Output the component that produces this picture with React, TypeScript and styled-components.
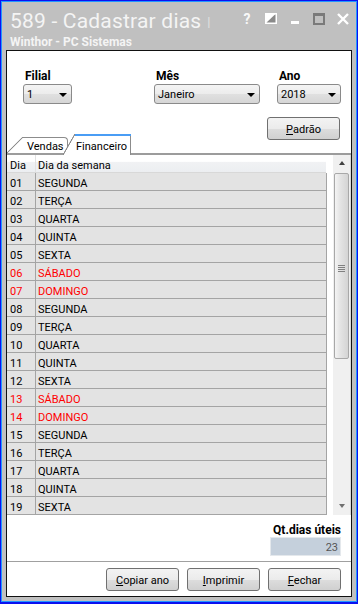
import React from 'react';
import styled, { createGlobalStyle, css } from 'styled-components';

const GlobalStyle = createGlobalStyle`
  html, body { margin: 0; padding: 0; background: #fff; }
  body { font-family: Roboto, "Liberation Sans", sans-serif; font-size: 11px; color: #000; }
  * { box-sizing: border-box; }
`;

const Window = styled.div`
  width: 358px;
  height: 604px;
  border: 1px solid #0a10f0;
  border-bottom-width: 2px;
  display: flex;
`;

const WindowFrame = styled.div`
  flex: 1;
  border: 1px solid #2196ff;
  background: #c0c0c0;
  padding: 0 4px 4px 4px;
  display: flex;
  flex-direction: column;
`;

const TitleBar = styled.div`
  height: 48px;
  flex-shrink: 0;
  display: flex;
  justify-content: space-between;
  align-items: flex-start;
  padding: 7px 0 0 4px;
  margin-right: -3px;
`;

const TitleText = styled.div`
  display: flex;
  flex-direction: column;
  color: #f4f4f4;
`;

const Title = styled.div`
  font-size: 21px;
  line-height: 24px;
  white-space: nowrap;
  letter-spacing: 0.2px;
`;

const Cut = styled.span`
  color: #e2e2e2;
  font-size: 13px;
  margin-left: 6px;
  vertical-align: 2px;
`;

const Subtitle = styled.div`
  font-size: 12px;
  font-weight: bold;
  line-height: 14px;
  margin-top: 1px;
`;

const Controls = styled.div`
  display: flex;
  padding-top: 1px;
`;

const Ctl = styled.div`
  width: 24px;
  height: 17px;
  display: flex;
  align-items: center;
  justify-content: center;
  color: #f8f8f8;
  font-weight: bold;
  font-size: 14px;
`;

const Panel = styled.div`
  flex: 1;
  background: #fff;
  border: 1px solid #111;
  display: flex;
  flex-direction: column;
`;

const FilterRow = styled.div`
  display: flex;
  padding: 16.5px 0 0 16px;
`;

const Field = styled.div<{ $width: number; $ml?: number }>`
  width: ${(p) => p.$width}px;
  margin-left: ${(p) => p.$ml || 0}px;
  display: flex;
  flex-direction: column;
`;

const Label = styled.div`
  font-size: 12px;
  font-weight: bold;
  line-height: 14px;
  padding: 1px 0 0 2px;
  margin-bottom: 1.5px;
`;

const Select = styled.div`
  height: 20px;
  border: 1px solid #8a8a8a;
  border-radius: 3px;
  background: linear-gradient(#f4f4f4, #ececec 50%, #e0e0e0 51%, #d6d6d6);
  display: flex;
  align-items: center;
  justify-content: space-between;
  padding: 1px 4px 0 3px;
  font-size: 11px;
`;

const Arrow = styled.span`
  width: 0;
  height: 0;
  border-left: 4px solid transparent;
  border-right: 4px solid transparent;
  border-top: 4px solid #000;
`;

const ToolRow = styled.div`
  display: flex;
  justify-content: space-between;
  padding-top: 13px;
  border-bottom: 2px solid #9c9c9c;
`;

const Tabs = styled.div`
  display: flex;
  align-items: flex-end;
  align-self: flex-end;
  margin-bottom: -2px;
`;

const Tab = styled.div<{ $active?: boolean; $slant: number; $width: number }>`
  position: relative;
  width: ${(p) => p.$width}px;
  margin-left: ${(p) => p.$slant}px;
  background: #fff;
  border-top: 1px solid #8c8c8c;
  border-right: 1px solid #8c8c8c;
  font-size: 11px;
  display: flex;
  align-items: flex-end;

  &::before {
    content: '';
    position: absolute;
    right: 100%;
    top: -1px;
    bottom: 0;
    width: ${(p) => p.$slant}px;
    background: linear-gradient(to bottom right, transparent calc(50% - 0.8px), #8c8c8c calc(50% - 0.3px), #8c8c8c calc(50% + 0.3px), #fff calc(50% + 0.8px));
  }

  ${(p) => p.$active
    ? css`
      height: 21px;
      z-index: 2;
      padding: 0 0 2px 1px;
      margin-left: ${p.$slant - 5}px;
      &::after {
        content: '';
        position: absolute;
        top: -1px;
        left: 0;
        right: -1px;
        height: 2px;
        background: #4a9df5;
      }
    `
    : css`
      height: 16px;
      margin-bottom: 2px;
      padding: 0 0 0 4px;
      border-top-right-radius: 4px;
    `}
`;

const Button = styled.div<{ $width?: number }>`
  width: ${(p) => p.$width || 73}px;
  height: 23px;
  border: 1px solid #707070;
  border-radius: 3px;
  background: linear-gradient(#f3f3f3, #ebebeb 50%, #dddddd 51%, #d0d0d0);
  display: flex;
  align-items: center;
  justify-content: center;
  padding-top: 1px;
  font-size: 11px;
`;

const PadraoButton = styled(Button)`
  margin: 0 11px 13px 0;
`;

const GridArea = styled.div`
  height: 360px;
  flex-shrink: 0;
  display: flex;
`;

const Table = styled.div`
  width: 320px;
  display: flex;
  flex-direction: column;
`;

const HeaderRow = styled.div`
  height: 18px;
  display: grid;
  grid-template-columns: 29px 1fr;
  border-bottom: 1px solid #d8d8d8;
  background: linear-gradient(#fff 0 38%, #f1f2f4 40%, #eceef1);
  margin-right: 1px;
`;

const HeadCell = styled.div<{ $first?: boolean }>`
  padding-left: ${(p) => (p.$first ? 3 : 2)}px;
  display: flex;
  align-items: flex-end;
  ${(p) => p.$first && css`border-right: 1px solid #e2e2e2;`}
`;

const Row = styled.div<{ $red?: boolean }>`
  height: 18px;
  display: grid;
  grid-template-columns: 29px 1fr;
  background: #e3e3e3;
  border-bottom: 1px solid #a4a4a4;
  border-right: 1px solid #a4a4a4;
  color: ${(p) => (p.$red ? '#ff0000' : '#000')};
`;

const Cell = styled.div<{ $first?: boolean }>`
  padding: 3px 0 0 ${(p) => (p.$first ? 3 : 2)}px;
  display: flex;
  align-items: center;
  ${(p) => p.$first && css`border-right: 1px solid #a4a4a4;`}
`;

const ScrollBar = styled.div`
  margin-left: auto;
  width: 18px;
  background: #f0f0f0;
  border-right: 1px solid #d8d8d8;
  display: flex;
  flex-direction: column;
  align-items: center;
  padding: 6px 0 0 0;
`;

const ScrollArrow = styled.span<{ $down?: boolean }>`
  width: 0;
  height: 0;
  border-left: 3.5px solid transparent;
  border-right: 3.5px solid transparent;
  ${(p) => (p.$down
    ? css`border-top: 4px solid #707070; margin-top: auto; margin-bottom: 7px;`
    : css`border-bottom: 4px solid #404040;`)}
`;

const Thumb = styled.div`
  width: 15px;
  height: 186px;
  margin-top: 8px;
  border: 1px solid #a8a8a8;
  border-radius: 2px;
  background: linear-gradient(to right, #f4f4f4, #e4e4e4 40%, #d4d4d4);
  display: flex;
  align-items: center;
  justify-content: center;
`;

const Grip = styled.div`
  width: 7px;
  height: 8px;
  background: repeating-linear-gradient(#808080 0 1px, transparent 1px 2px);
  margin-top: 6px;
`;

const Footer = styled.div`
  display: flex;
  flex-direction: column;
  align-items: flex-end;
  padding: 8px 10px 5px 0;
  border-bottom: 1px solid #a0a0a0;
`;

const TotalLabel = styled(Label)`
  padding: 0;
  margin-bottom: 0;
`;

const TotalBox = styled.div`
  width: 71px;
  height: 19px;
  background: #c5d0dc;
  border: 1px solid #e4e8ec;
  color: #555;
  font-size: 11px;
  display: flex;
  align-items: center;
  justify-content: flex-end;
  padding: 1px 2px 0 0;
`;

const ButtonBar = styled.div`
  display: flex;
  justify-content: flex-end;
  gap: 8px;
  padding: 6px 10px 4px 0;
`;

const days = ['SEGUNDA', 'TERÇA', 'QUARTA', 'QUINTA', 'SEXTA', 'SÁBADO', 'DOMINGO'];
const rows = Array.from({ length: 19 }, (_, i) => ({
  dia: String(i + 1).padStart(2, '0'),
  nome: days[i % 7],
  red: i % 7 >= 5,
}));

export default function App() {
  return (
    <>
      <GlobalStyle />
      <Window>
        <WindowFrame>
          <TitleBar>
            <TitleText>
              <Title>589 - Cadastrar dias<Cut>|</Cut></Title>
              <Subtitle>Winthor - PC Sistemas</Subtitle>
            </TitleText>
            <Controls>
              <Ctl>?</Ctl>
              <Ctl>
                <svg width="12" height="11" viewBox="0 0 12 11">
                  <rect x="0.75" y="0.75" width="10.5" height="9.5" fill="#8a8a8a" stroke="#fff" strokeWidth="1.5" />
                  <polygon points="1,1 10.5,1 1,10" fill="#fff" />
                </svg>
              </Ctl>
              <Ctl>
                <svg width="9" height="11" viewBox="0 0 9 11">
                  <rect x="0" y="8" width="8" height="3" fill="#fff" />
                </svg>
              </Ctl>
              <Ctl>
                <svg width="12" height="12" viewBox="0 0 12 12">
                  <rect x="1" y="1.5" width="10" height="9.5" fill="none" stroke="#7a7a7a" strokeWidth="2" />
                  <rect x="0" y="0" width="12" height="3" fill="#7a7a7a" />
                </svg>
              </Ctl>
              <Ctl>
                <svg width="12" height="12" viewBox="0 0 12 12">
                  <path d="M1 1 L11 11 M11 1 L1 11" stroke="#fff" strokeWidth="2.4" />
                </svg>
              </Ctl>
            </Controls>
          </TitleBar>
          <Panel>
            <FilterRow>
              <Field $width={49}>
                <Label>Filial</Label>
                <Select>1<Arrow /></Select>
              </Field>
              <Field $width={106} $ml={82}>
                <Label>Mês</Label>
                <Select>Janeiro<Arrow /></Select>
              </Field>
              <Field $width={64} $ml={17}>
                <Label>Ano</Label>
                <Select>2018<Arrow /></Select>
              </Field>
            </FilterRow>
            <ToolRow>
              <Tabs>
                <Tab $slant={16} $width={45}>Vendas</Tab>
                <Tab $slant={12} $width={56} $active>Financeiro</Tab>
              </Tabs>
              <PadraoButton><u>P</u>adrão</PadraoButton>
            </ToolRow>
            <GridArea>
              <Table>
                <HeaderRow>
                  <HeadCell $first>Dia</HeadCell>
                  <HeadCell>Dia da semana</HeadCell>
                </HeaderRow>
                {rows.map((r) => (
                  <Row key={r.dia} $red={r.red}>
                    <Cell $first>{r.dia}</Cell>
                    <Cell>{r.nome}</Cell>
                  </Row>
                ))}
              </Table>
              <ScrollBar>
                <ScrollArrow />
                <Thumb><Grip /></Thumb>
                <ScrollArrow $down />
              </ScrollBar>
            </GridArea>
            <Footer>
              <TotalLabel>Qt.dias úteis</TotalLabel>
              <TotalBox>23</TotalBox>
            </Footer>
            <ButtonBar>
              <Button><u>C</u>opiar ano</Button>
              <Button><u>I</u>mprimir</Button>
              <Button><u>F</u>echar</Button>
            </ButtonBar>
          </Panel>
        </WindowFrame>
      </Window>
    </>
  );
}
